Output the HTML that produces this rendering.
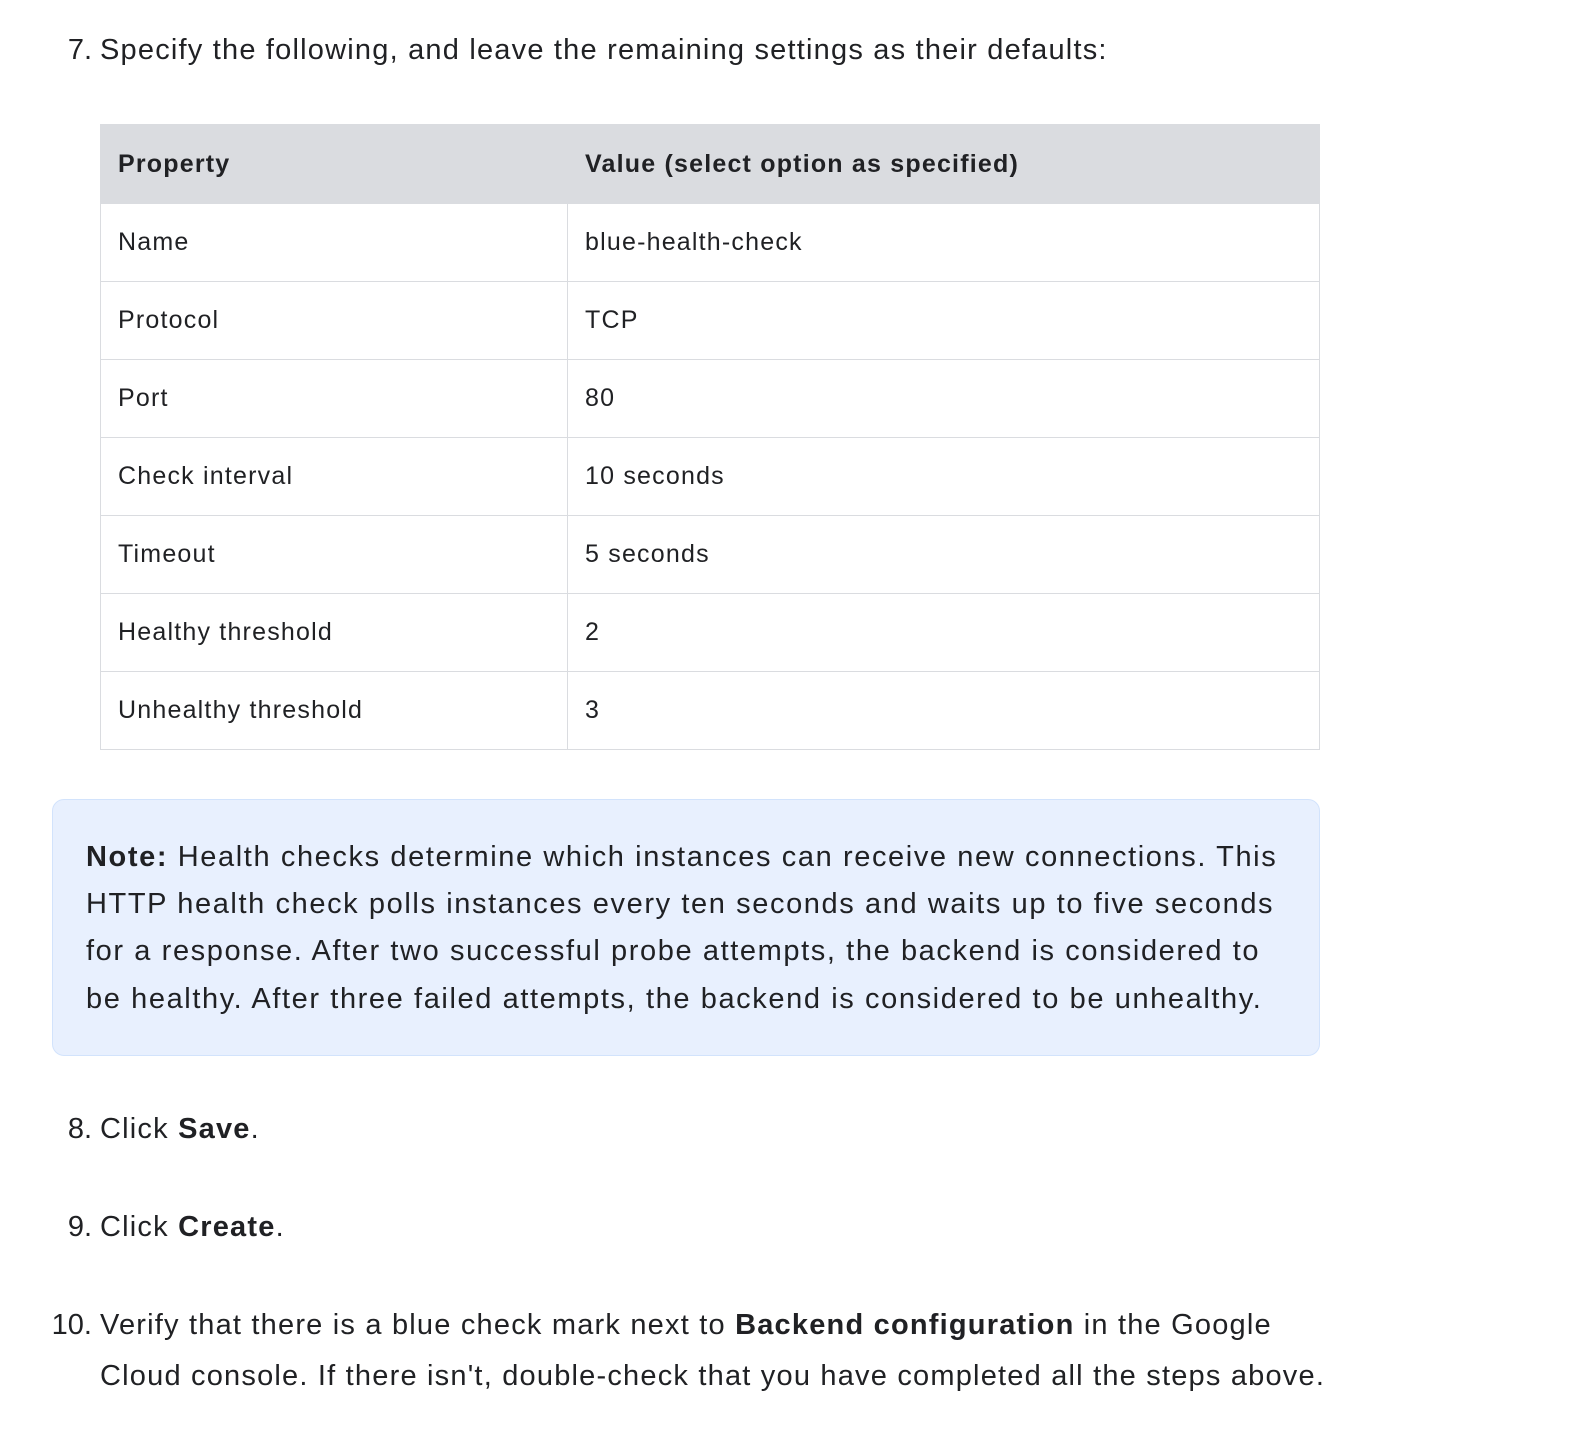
<!DOCTYPE html>
<html><head><style>
body{margin:0;background:#fff;font-family:"Liberation Sans",Arial,sans-serif;color:#202124;}
.t{position:absolute;white-space:nowrap;font-size:29px;line-height:40px;letter-spacing:1.2px;}
.num{position:absolute;font-size:29px;line-height:40px;text-align:right;width:92px;left:0;}
table{position:absolute;left:100px;top:124px;width:1220px;border-collapse:collapse;font-size:25px;letter-spacing:1.2px;}
td,th{border:1.5px solid #dadce0;height:76.5px;padding:0 0 0 17px;text-align:left;box-sizing:border-box;}
tr{height:78px;}
th{background:#dadce0;height:79px;font-weight:bold;}
.note{position:absolute;left:52px;top:799px;width:1268px;height:257px;background:#e8f0fe;border:1.5px solid #d2e3fc;border-radius:12px;box-sizing:border-box;}
.note div{position:absolute;left:33px;font-size:29px;white-space:nowrap;line-height:40px;letter-spacing:1.6px;}
</style></head><body>
<div class="num" style="top:30px">7.</div><div class="t" style="left:100px;top:30px">Specify the following, and leave the remaining settings as their defaults:</div>
<table>
<tr><th style="width:467px">Property</th><th>Value (select option as specified)</th></tr>
<tr><td>Name</td><td>blue-health-check</td></tr>
<tr><td>Protocol</td><td>TCP</td></tr>
<tr><td>Port</td><td>80</td></tr>
<tr><td>Check interval</td><td>10 seconds</td></tr>
<tr><td>Timeout</td><td>5 seconds</td></tr>
<tr><td>Healthy threshold</td><td>2</td></tr>
<tr><td>Unhealthy threshold</td><td>3</td></tr>
</table>
<div class="note">
<div style="top:37px"><b>Note:</b> Health checks determine which instances can receive new connections. This</div>
<div style="top:84px">HTTP health check polls instances every ten seconds and waits up to five seconds</div>
<div style="top:131px">for a response. After two successful probe attempts, the backend is considered to</div>
<div style="top:179px">be healthy. After three failed attempts, the backend is considered to be unhealthy.</div>
</div>
<div class="num" style="top:1109px">8.</div><div class="t" style="left:100px;top:1109px">Click <b>Save</b>.</div>
<div class="num" style="top:1207px">9.</div><div class="t" style="left:100px;top:1207px">Click <b>Create</b>.</div>
<div class="num" style="top:1305px">10.</div><div class="t" style="left:100px;top:1305px">Verify that there is a blue check mark next to <b>Backend configuration</b> in the Google</div>
<div class="t" style="left:100px;top:1356px">Cloud console. If there isn't, double-check that you have completed all the steps above.</div>
</body></html>
